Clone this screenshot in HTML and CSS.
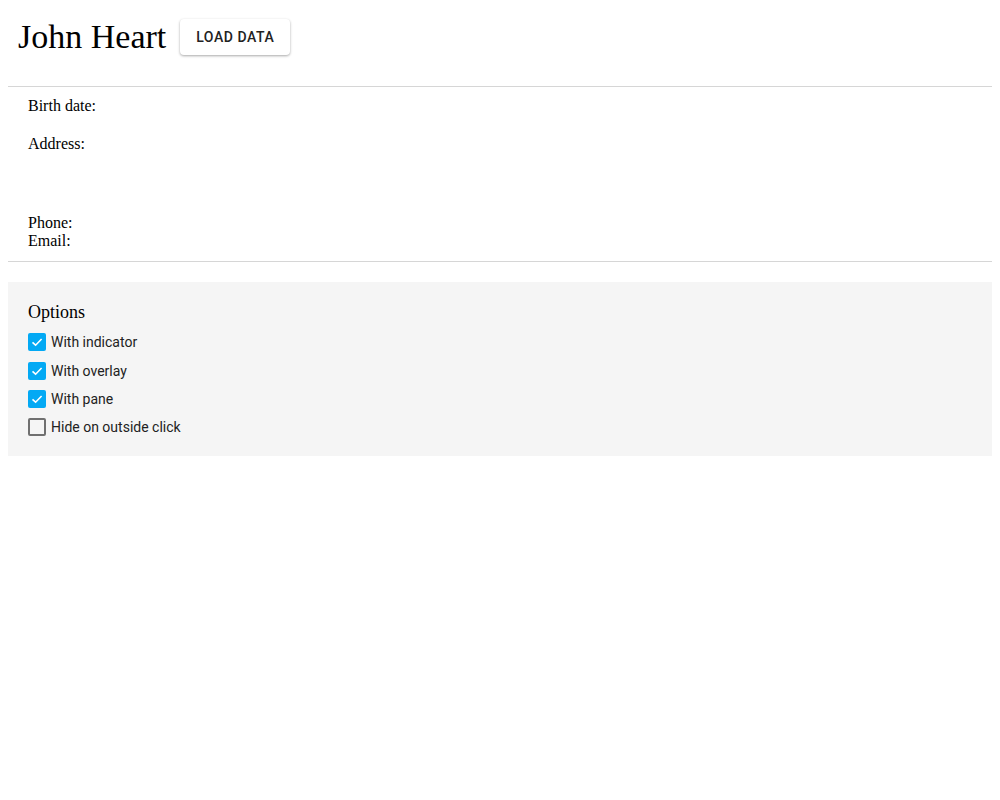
FILE: index.html
```html
<!DOCTYPE html>
<html>
<head>
<meta charset="utf-8">
<link rel="stylesheet" href="styles.css">
</head>
<body>
<div class="header">
  <div class="name">John Heart</div>
  <button class="btn">LOAD DATA</button>
</div>
<div class="info">
  <div class="row birth">Birth date:</div>
  <div class="row address">Address:</div>
  <div class="row phone">Phone:</div>
  <div class="row">Email:</div>
</div>
<div class="options">
  <div class="caption">Options</div>
  <label class="opt first"><span class="box checked"><svg viewBox="0 0 18 18" width="18" height="18"><path d="M4.5 9.3 L7.6 12.2 L13.6 6" fill="none" stroke="#fff" stroke-width="1.6"/></svg></span><span class="lbl">With indicator</span></label>
  <label class="opt"><span class="box checked"><svg viewBox="0 0 18 18" width="18" height="18"><path d="M4.5 9.3 L7.6 12.2 L13.6 6" fill="none" stroke="#fff" stroke-width="1.6"/></svg></span><span class="lbl">With overlay</span></label>
  <label class="opt"><span class="box checked"><svg viewBox="0 0 18 18" width="18" height="18"><path d="M4.5 9.3 L7.6 12.2 L13.6 6" fill="none" stroke="#fff" stroke-width="1.6"/></svg></span><span class="lbl">With pane</span></label>
  <label class="opt"><span class="box"></span><span class="lbl">Hide on outside click</span></label>
</div>
</body>
</html>
```
FILE: styles.css
```css
body {
  margin: 8px;
  font-family: "Liberation Serif", "Times New Roman", serif;
  color: #000;
  background: #fff;
}
.header {
  display: flex;
  align-items: center;
  height: 58px;
  padding: 0 0 20px 10px;
}
.name {
  font-size: 34px;
  line-height: 40px;
}
.btn {
  margin-left: 14px;
  height: 36px;
  width: 110px;
  border: none;
  border-radius: 4px;
  background: #fff;
  font-family: Roboto, "Liberation Sans", sans-serif;
  font-weight: 500;
  font-size: 14px;
  letter-spacing: 0.04em;
  color: #222;
  box-shadow: 0 1px 3px rgba(0,0,0,0.24), 0 1px 2px rgba(0,0,0,0.12);
  padding: 0;
}
.info {
  border-top: 1px solid #d6d6d6;
  border-bottom: 1px solid #d6d6d6;
  padding: 10px 20px 11px;
  font-size: 16px;
  line-height: 18px;
}
.birth {
  margin-bottom: 20px;
}
.address {
  margin-bottom: 61px;
}
.options {
  margin-top: 20px;
  background: #f5f5f5;
  padding: 20px 20px 15px;
}
.caption {
  font-size: 18px;
  line-height: 20px;
  margin-bottom: 6px;
}
.opt {
  display: flex;
  align-items: center;
  height: 28px;
  font-family: Roboto, "Liberation Sans", sans-serif;
  font-size: 14px;
  color: #222;
}
.opt.first {
  height: 29px;
  padding-bottom: 1px;
  box-sizing: border-box;
}
.box {
  width: 18px;
  height: 18px;
  box-sizing: border-box;
  border: 2px solid #707070;
  border-radius: 2px;
  margin-right: 5px;
  display: flex;
}
.box.checked {
  border: none;
  background: #03a9f4;
}
.box svg {
  display: block;
}
```
